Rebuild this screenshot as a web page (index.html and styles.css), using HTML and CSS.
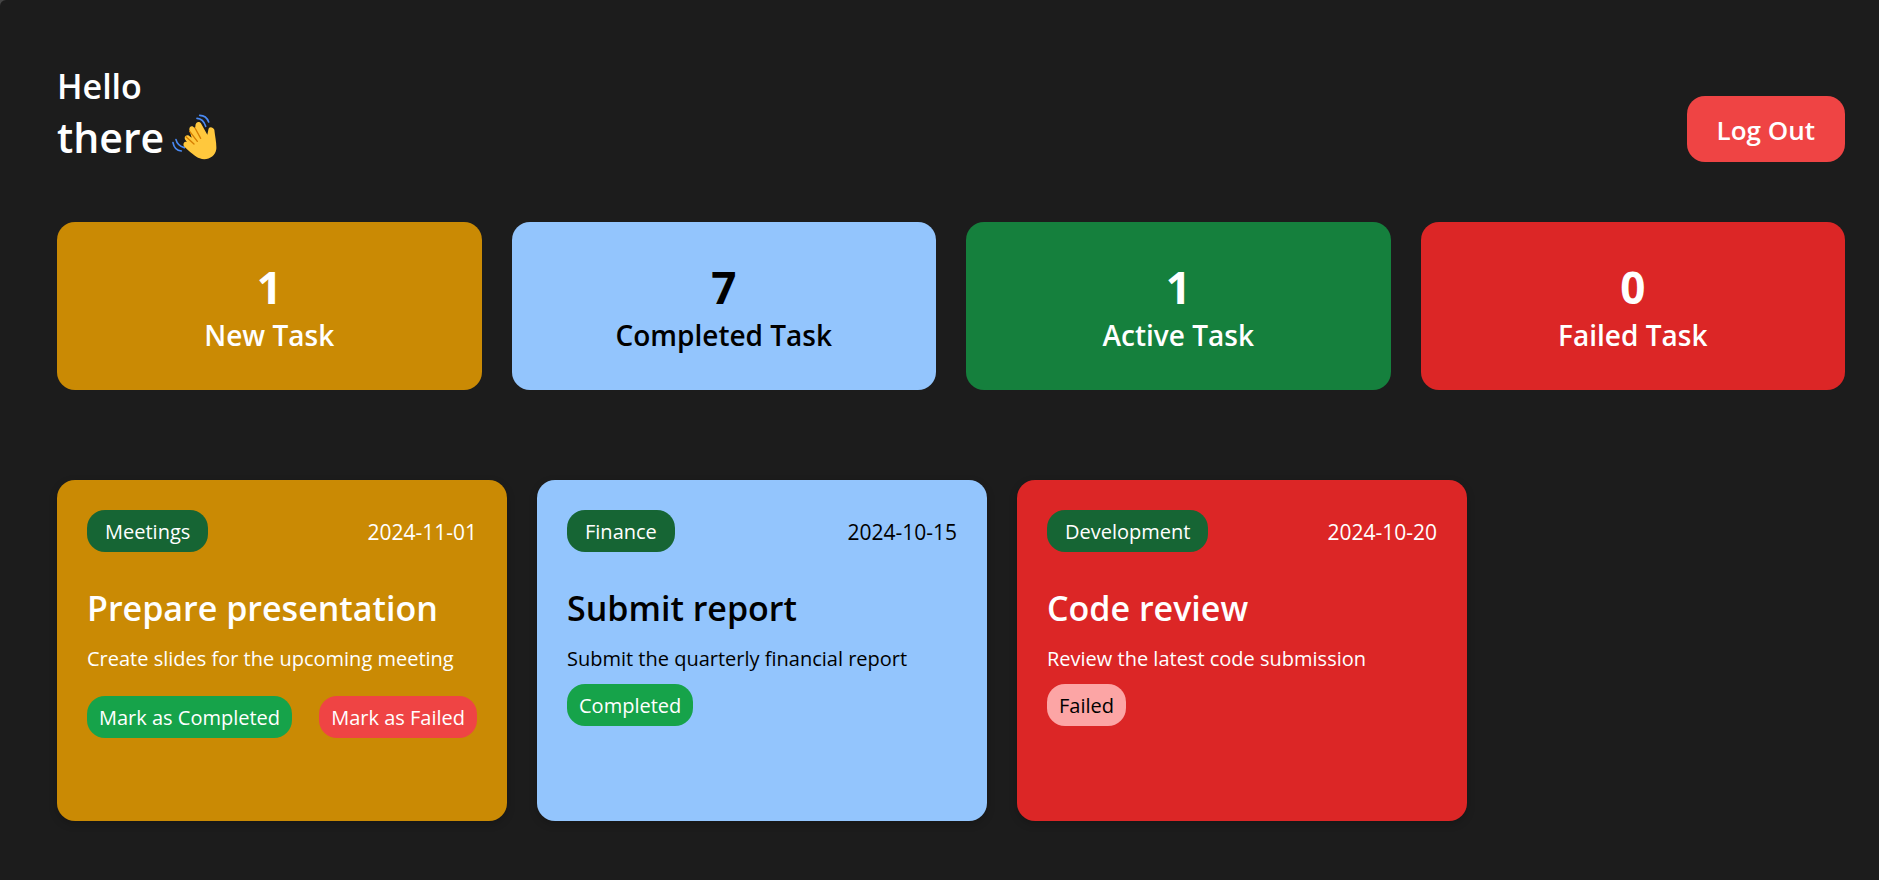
FILE: index.html
```html
<!DOCTYPE html>
<html lang="en">
<head>
<meta charset="utf-8">
<meta name="viewport" content="width=device-width, initial-scale=1">
<title>Employee Dashboard</title>
<link rel="stylesheet" href="styles.css">
</head>
<body>
<div class="dashboard">
  <header class="header">
    <h1 class="greeting">
      Hello
      <span class="greeting-name">there
        <svg class="wave" viewBox="21 27 138 138" role="img" aria-label="waving hand">
          <g fill="none" stroke="#4a8af4" stroke-width="5" stroke-linecap="round">
            <path d="M104 31Q124 31 131 51"/>
            <path d="M96 40Q115 41 122 64"/>
            <path d="M33 104Q37 122 58 128"/>
            <path d="M24 113Q28 136 49 138"/>
          </g>
          <path fill="#ffc83d" d="M104 160C92 155 76 142 58 125C52 119 57 107 66 111L62 106C54 96 64 87 72 92L80 98L73 75C72 62 84 61 88 69L91 66C90 50 104 47 109 57L127 89L130 74C131 63 144 65 148 74C150 94 155 113 154 132C151 155 126 169 104 160Z"/>
          <g fill="none" stroke="#d67d00" stroke-width="4" stroke-linecap="round">
            <path d="M90 69L107 100"/>
            <path d="M74 79L97 109"/>
            <path d="M63 95L87 117"/>
          </g>
        </svg>
      </span>
    </h1>
    <button class="logout" type="button">Log Out</button>
  </header>

  <section class="stats" aria-label="Task totals">
    <div class="stat yellow"><h2 class="stat-count">1</h2><h3 class="stat-label">New Task</h3></div>
    <div class="stat blue"><h2 class="stat-count">7</h2><h3 class="stat-label">Completed Task</h3></div>
    <div class="stat green"><h2 class="stat-count">1</h2><h3 class="stat-label">Active Task</h3></div>
    <div class="stat red"><h2 class="stat-count">0</h2><h3 class="stat-label">Failed Task</h3></div>
  </section>

  <section class="tasks" aria-label="Tasks">
    <article class="task yellow">
      <div class="task-top"><span class="pill category">Meetings</span><time class="task-date" datetime="2024-11-01">2024-11-01</time></div>
      <h2 class="task-title">Prepare presentation</h2>
      <p class="task-text">Create slides for the upcoming meeting</p>
      <div class="task-actions">
        <button class="pill complete" type="button">Mark as Completed</button>
        <button class="pill fail" type="button">Mark as Failed</button>
      </div>
    </article>
    <article class="task blue">
      <div class="task-top"><span class="pill category">Finance</span><time class="task-date" datetime="2024-10-15">2024-10-15</time></div>
      <h2 class="task-title">Submit report</h2>
      <p class="task-text">Submit the quarterly financial report</p>
      <div class="task-status"><span class="pill complete">Completed</span></div>
    </article>
    <article class="task red">
      <div class="task-top"><span class="pill category">Development</span><time class="task-date" datetime="2024-10-20">2024-10-20</time></div>
      <h2 class="task-title">Code review</h2>
      <p class="task-text">Review the latest code submission</p>
      <div class="task-status"><span class="pill failed">Failed</span></div>
    </article>
  </section>
</div>
</body>
</html>
```

FILE: styles.css
```css
* { box-sizing: border-box; margin: 0; }

html { background: #454545; }

body {
  color: #fff;
  font-family: "Segoe UI", "Open Sans", "Noto Sans", sans-serif;
  font-size: 20px;
  line-height: 30px;
}

button { border: 0; color: inherit; font: inherit; cursor: pointer; }

.dashboard {
  min-height: 100vh;
  padding: 62px 34px 58px 57px;
  background: #1c1c1c;
  border-top-left-radius: 6px;
}

.header { display: flex; align-items: flex-end; justify-content: space-between; }

.greeting { font-size: 34px; font-weight: 600; line-height: 48px; }

.greeting-name {
  display: flex;
  align-items: center;
  gap: 8px;
  font-size: 41px;
  line-height: 54px;
}

.wave { width: 46px; height: 46px; }

.logout {
  margin-bottom: 2px;
  padding: 13px 30px 11px;
  background: #ef4444;
  border-radius: 18px;
  font-size: 26px;
  font-weight: 600;
  line-height: 42px;
}

.stats {
  display: grid;
  grid-template-columns: repeat(4, 1fr);
  gap: 30px;
  margin-top: 58px;
}

.stat { padding: 38px 30px 34px; border-radius: 18px; text-align: center; }
.stat-count { font-size: 44px; font-weight: 700; line-height: 54px; }
.stat-label { font-size: 28px; font-weight: 600; line-height: 42px; }

.tasks { display: flex; gap: 30px; margin-top: 90px; }

.task {
  flex: 0 1 450px;
  min-height: 341px;
  padding: 30px;
  border-radius: 18px;
  box-shadow: 0 3px 9px rgb(0 0 0 / 20%);
}

.task-top { display: flex; align-items: center; justify-content: space-between; }
.task-date { padding-top: 2px; font-size: 21px; }
.task-title { margin-top: 32px; font-size: 34px; font-weight: 600; line-height: 48px; }
.task-text { margin-top: 12px; }
.task-status { display: flex; margin-top: 10px; }
.task-actions { display: flex; justify-content: space-between; margin-top: 22px; }

.pill { padding: 7px 12px 5px; border-radius: 18px; }
.category { padding-inline: 18px; background: #166534; color: #fff; }
.complete { background: #16a34a; color: #fff; }
.fail { background: #ef4444; }
.failed { background: #fca5a5; color: #000; }

.yellow { background: #ca8a04; }
.blue { background: #93c5fd; color: #000; }
.green { background: #15803d; }
.red { background: #dc2626; }
```
